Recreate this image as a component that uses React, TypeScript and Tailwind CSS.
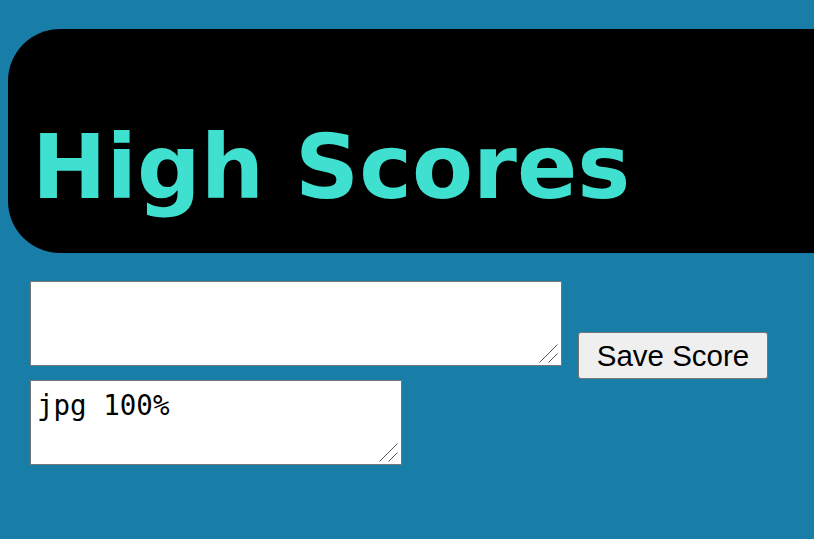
function Grip() {
  return (
    <svg className="absolute right-[4px] bottom-[3px] pointer-events-none" width="19" height="19" viewBox="0 0 19 19">
      <line x1="0.5" y1="18.5" x2="18.5" y2="0.5" stroke="#555" strokeWidth="1" />
      <line x1="9.5" y1="18.5" x2="18.5" y2="9.5" stroke="#555" strokeWidth="1" />
    </svg>
  );
}

export default function App() {
  return (
    <div className="min-h-screen bg-[#187ea8] pt-[29px] pl-2">
      <div className="h-[224px] bg-black rounded-l-[52px] pt-[85px] pl-[24px]">
        <h1 className="text-[89px] font-bold leading-[107px] text-[#40e0d0] font-['DejaVu_Sans',Verdana,sans-serif]">
          High Scores
        </h1>
      </div>
      <div className="pl-[22px] pt-[28px]">
        <div className="flex items-start">
          <div className="relative">
            <textarea className="w-[532px] h-[85px] bg-white border border-[#767676] p-[2px] block resize-none" />
            <Grip />
          </div>
          <button className="ml-[16px] mt-[51px] h-[47px] w-[190px] bg-[#efefef] border border-[#767676] rounded-[3px] text-[29.5px] text-black font-['Liberation_Sans',Arial,sans-serif] leading-none">
            Save Score
          </button>
        </div>
        <div className="relative mt-[1px] w-[372px]">
          <textarea
            className="w-[372px] h-[85px] bg-white border border-[#767676] pt-[8px] px-[6px] block resize-none text-[27.5px] leading-[32px] text-black font-['DejaVu_Sans_Mono',monospace]"
            defaultValue="jpg 100%"
          />
          <Grip />
        </div>
      </div>
    </div>
  );
}
